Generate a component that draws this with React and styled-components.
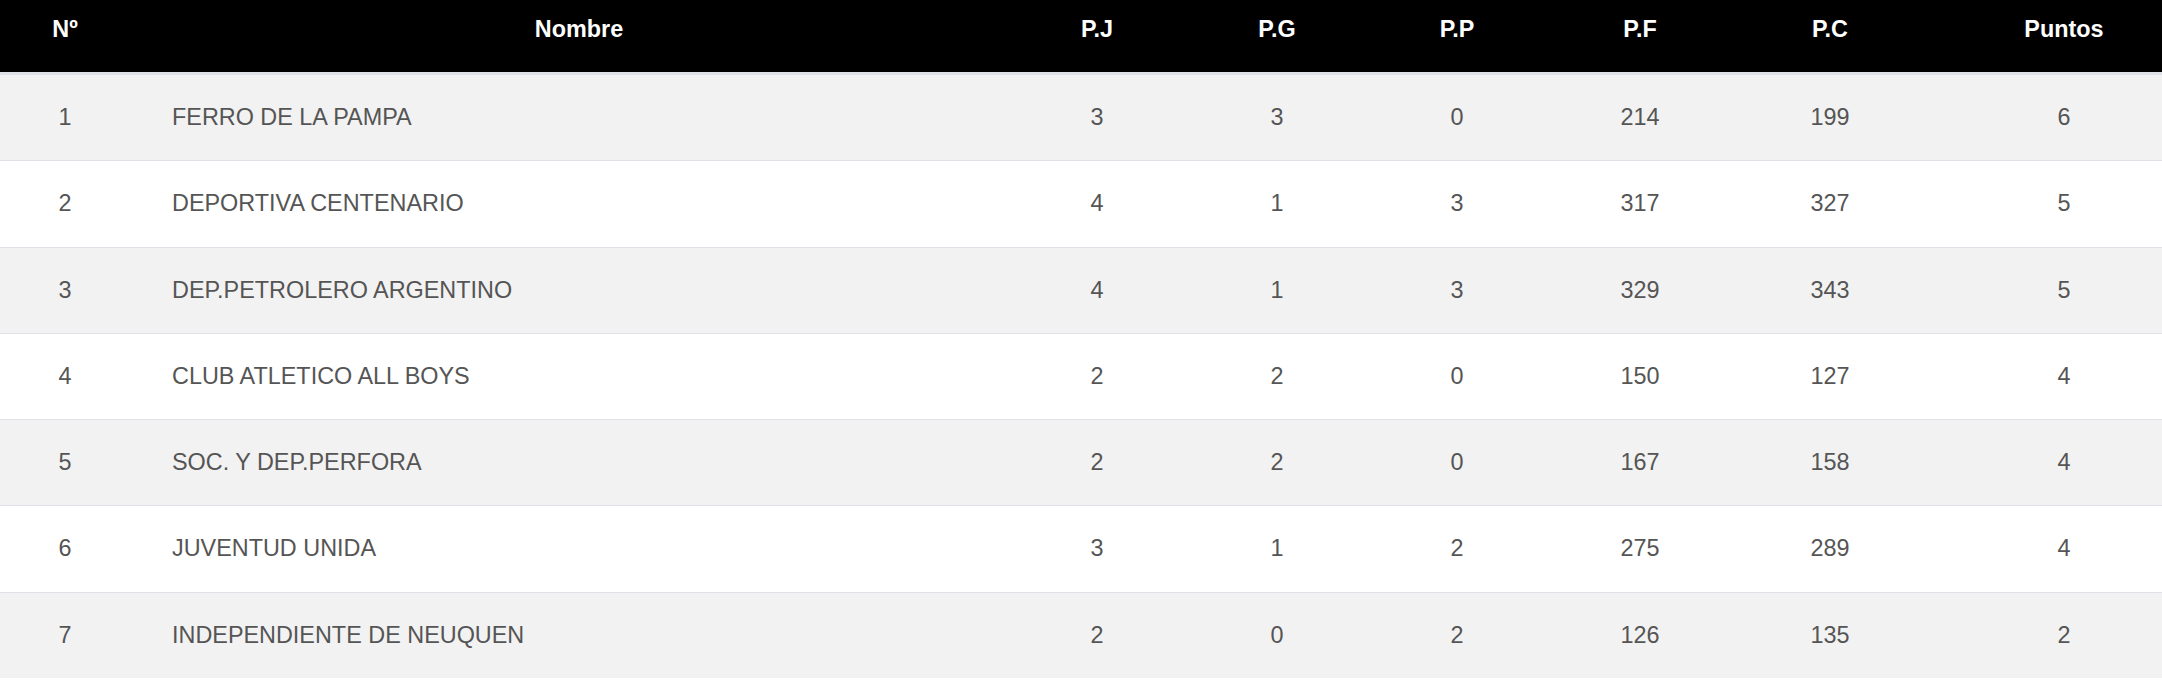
import React from 'react';
import styled, { createGlobalStyle } from 'styled-components';

const GlobalStyle = createGlobalStyle`
  html, body {
    margin: 0;
    padding: 0;
    background: #fff;
  }
  body {
    font-family: "Liberation Sans", Arial, Helvetica, sans-serif;
  }
`;

const COLUMNS = '130px 898px 138px 222px 138px 228px 152px 1fr';

const Table = styled.div`
  width: 100%;
  font-size: 23.4px;
  line-height: 1.5;
`;

const HeadRow = styled.div`
  display: grid;
  grid-template-columns: ${COLUMNS};
  height: 72px;
  background: #000;
  border-bottom: 2px solid #dee2e6;
`;

const HeadCell = styled.div`
  color: #fff;
  font-weight: 700;
  text-align: center;
  padding-top: 12px;
  padding-left: ${p => (p.$shift ? '60px' : '0')};
  white-space: nowrap;
`;

const Row = styled.div`
  display: grid;
  grid-template-columns: ${COLUMNS};
  align-items: center;
  height: 85.25px;
  border-top: 1px solid #dee2e6;
  background: ${p => (p.$striped ? '#f2f2f2' : '#fff')};
`;

const Cell = styled.div`
  color: #555;
  text-align: ${p => (p.$left ? 'left' : 'center')};
  padding-left: ${p => (p.$left ? '42px' : p.$shift ? '60px' : '0')};
  white-space: nowrap;
`;

const headers = ['Nº', 'Nombre', 'P.J', 'P.G', 'P.P', 'P.F', 'P.C', 'Puntos'];

const teams = [
  [1, 'FERRO DE LA PAMPA', 3, 3, 0, 214, 199, 6],
  [2, 'DEPORTIVA CENTENARIO', 4, 1, 3, 317, 327, 5],
  [3, 'DEP.PETROLERO ARGENTINO', 4, 1, 3, 329, 343, 5],
  [4, 'CLUB ATLETICO ALL BOYS', 2, 2, 0, 150, 127, 4],
  [5, 'SOC. Y DEP.PERFORA', 2, 2, 0, 167, 158, 4],
  [6, 'JUVENTUD UNIDA', 3, 1, 2, 275, 289, 4],
  [7, 'INDEPENDIENTE DE NEUQUEN', 2, 0, 2, 126, 135, 2],
];

export default function App() {
  return (
    <>
      <GlobalStyle />
      <Table>
        <HeadRow>
          {headers.map((h, i) => (
            <HeadCell key={h} $shift={i === headers.length - 1}>
              {h}
            </HeadCell>
          ))}
        </HeadRow>
        {teams.map((row, r) => (
          <Row key={row[0]} $striped={r % 2 === 0}>
            {row.map((value, i) => (
              <Cell key={i} $left={i === 1} $shift={i === row.length - 1}>
                {value}
              </Cell>
            ))}
          </Row>
        ))}
      </Table>
    </>
  );
}
